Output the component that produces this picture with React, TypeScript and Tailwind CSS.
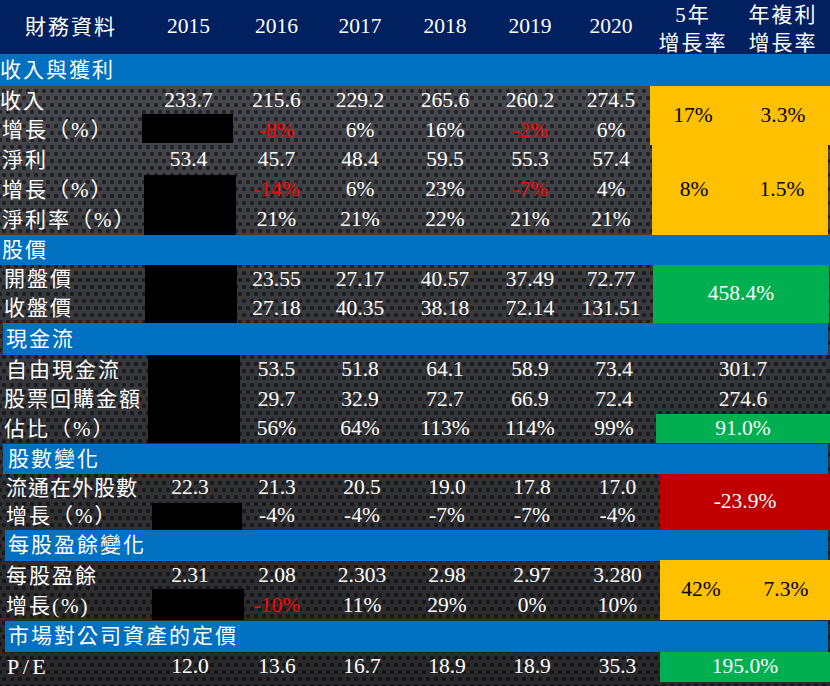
const FONT = "font-[family-name:Liberation_Serif,Noto_Sans_CJK_TC,serif]";

type Val = string | [string, "red"];

function Vals({ items }: { items: Val[] }) {
  return (
    <>
      {items.map((it, i) =>
        typeof it === "string" ? (
          <div key={i} className="flex items-center justify-center text-white">
            {it}
          </div>
        ) : (
          <div key={i} className="flex items-center justify-center text-[#ff0000]">
            {it[0]}
          </div>
        )
      )}
    </>
  );
}

function Label({ children, className = "" }: { children: React.ReactNode; className?: string }) {
  return (
    <div className={`flex items-center whitespace-nowrap text-[21px] text-white ${className}`}>
      {children}
    </div>
  );
}

function Bar({ title, className = "" }: { title: string; className?: string }) {
  return (
    <div
      className={`flex items-center whitespace-nowrap bg-[#0070c0] text-[21px] tracking-[2px] text-white ${className}`}
    >
      {title}
    </div>
  );
}

function Redact({ className = "" }: { className?: string }) {
  return <div className={`bg-black ${className}`} />;
}

function Split({ className, a, b }: { className: string; a: string; b: string }) {
  return (
    <div className={`grid items-center bg-[#ffc000] text-center text-black ${className}`}>
      <span>{a}</span>
      <span>{b}</span>
    </div>
  );
}

function Solid({ className, value }: { className: string; value: string }) {
  return <div className={`flex items-center justify-center text-white ${className}`}>{value}</div>;
}

export default function App() {
  return (
    <div
      className={`h-[686px] w-[830px] overflow-hidden ${FONT} text-[21.5px] leading-none [background-image:radial-gradient(circle,rgba(0,0,0,0.5)_1.9px,transparent_2.5px),radial-gradient(circle,rgba(0,0,0,0.5)_1.9px,transparent_2.5px),linear-gradient(to_bottom,#4e4f55,#3a3b3f_40%,#29292b)] [background-size:8px_14px,8px_14px,100%_100%] [background-position:0_0,4px_7px,0_0]`}
    >
      {/* 表頭 */}
      <div className="grid h-[54px] grid-cols-[142px_93px_83px_84px_86px_84px_78px_86px_94px] bg-[#002060] text-white">
        <div className="flex items-center justify-center text-[21px] tracking-[2px]">財務資料</div>
        {["2015", "2016", "2017", "2018", "2019", "2020"].map((y) => (
          <div key={y} className="flex items-center justify-center">
            {y}
          </div>
        ))}
        <div className="flex flex-col items-center justify-center gap-[7px] pt-[4px] text-[21px] tracking-[2px]">
          <span>5年</span>
          <span>增長率</span>
        </div>
        <div className="flex flex-col items-center justify-center gap-[7px] pt-[4px] text-[21px] tracking-[2px]">
          <span>年複利</span>
          <span>增長率</span>
        </div>
      </div>

      {/* 收入與獲利 */}
      <Bar title="收入與獲利" className="h-[32px]" />
      <div className="grid grid-cols-[142px_93px_83px_84px_86px_84px_78px_180px] grid-rows-[30px_29px_30px_30px_30px]">
        <Label className="tracking-[2px]">收入</Label>
        <Vals items={["233.7", "215.6", "229.2", "265.6", "260.2", "274.5"]} />
        <Split className="row-span-2 grid-cols-[86px_1fr]" a="17%" b="3.3%" />
        <Label className="pl-[2px] tracking-[2px]">增長（%）</Label>
        <Redact className="mb-[2px] mr-[2px] mt-[-2px]" />
        <Vals items={[["-8%", "red"], "6%", "16%", ["-2%", "red"], "6%"]} />
        <Label className="pl-[2px] tracking-[2px]">淨利</Label>
        <Vals items={["53.4", "45.7", "48.4", "59.5", "55.3", "57.4"]} />
        <Split className="row-span-3 ml-[2px] mr-[2px] grid-cols-[84px_1fr]" a="8%" b="1.5%" />
        <Label className="pl-[2px] tracking-[2px]">增長（%）</Label>
        <Redact className="row-span-2 ml-[2px] mr-[-1px]" />
        <Vals items={[["-14%", "red"], "6%", "23%", ["-7%", "red"], "4%"]} />
        <Label className="pl-[2px] tracking-[2px]">淨利率（%）</Label>
        <Vals items={["21%", "21%", "22%", "21%", "21%"]} />
      </div>

      {/* 股價 */}
      <Bar title="股價" className="h-[30px] pl-[2px]" />
      <div className="grid grid-cols-[142px_93px_83px_84px_86px_84px_78px_180px] grid-rows-[29px_29px]">
        <Label className="pl-[4px] tracking-[2px]">開盤價</Label>
        <Redact className="row-span-2 ml-[3px] mr-[-2px]" />
        <Vals items={["23.55", "27.17", "40.57", "37.49", "72.77"]} />
        <Solid className="row-span-2 ml-[3px] mr-[1px] bg-[#00b050]" value="458.4%" />
        <Label className="pl-[4px] tracking-[2px]">收盤價</Label>
        <Vals items={["27.18", "40.35", "38.18", "72.14", "131.51"]} />
      </div>

      {/* 現金流 */}
      <Bar title="現金流" className="ml-[3px] mr-[2px] h-[32px] pl-[3px]" />
      <div className="grid grid-cols-[142px_93px_83px_84px_86px_84px_84px_174px] grid-rows-[30px_29px_30px]">
        <Label className="pl-[6px] tracking-[2px]">自由現金流</Label>
        <Redact className="row-span-3 mb-[1px] ml-[6px] mr-[-5px]" />
        <Vals items={["53.5", "51.8", "64.1", "58.9", "73.4"]} />
        <Solid className="" value="301.7" />
        <Label className="pl-[4px] tracking-[2px]">股票回購金額</Label>
        <Vals items={["29.7", "32.9", "72.7", "66.9", "72.4"]} />
        <Solid className="" value="274.6" />
        <Label className="pl-[4px] tracking-[2px]">佔比（%）</Label>
        <Vals items={["56%", "64%", "113%", "114%", "99%"]} />
        <Solid className="mb-[1px] bg-[#00b050]" value="91.0%" />
      </div>

      {/* 股數變化 */}
      <Bar title="股數變化" className="ml-[3px] mr-[2px] h-[30px] pl-[5px]" />
      <div className="grid grid-cols-[145px_90px_84px_86px_84px_86px_85px_170px] grid-rows-[28px_28px]">
        <Label className="pl-[6px] tracking-[1px]">流通在外股數</Label>
        <Vals items={["22.3", "21.3", "20.5", "19.0", "17.8", "17.0"]} />
        <Solid className="row-span-2 bg-[#c00000]" value="-23.9%" />
        <Label className="pl-[6px] tracking-[2px]">增長（%）</Label>
        <Redact className="ml-[7px] mr-[-7px] mt-[1px]" />
        <Vals items={["-4%", "-4%", "-7%", "-7%", "-4%"]} />
      </div>

      {/* 每股盈餘變化 */}
      <Bar title="每股盈餘變化" className="ml-[5px] mr-[2px] h-[31px] pl-[3px]" />
      <div className="grid grid-cols-[145px_90px_84px_86px_84px_86px_85px_170px] grid-rows-[30px_30px]">
        <Label className="pl-[6px] tracking-[2px]">每股盈餘</Label>
        <Vals items={["2.31", "2.08", "2.303", "2.98", "2.97", "3.280"]} />
        <Split className="row-span-2 mb-[1px] mt-[-1px] grid-cols-[82px_1fr]" a="42%" b="7.3%" />
        <Label className="pl-[6px] tracking-[2px]">增長(%)</Label>
        <Redact className="mb-[1px] ml-[7px] mr-[-9px] mt-[-2px]" />
        <Vals items={[["-10%", "red"], "11%", "29%", "0%", "10%"]} />
      </div>

      {/* 市場對公司資產的定價 */}
      <Bar title="市場對公司資產的定價" className="ml-[5px] mr-[2px] h-[31px] pl-[3px] tracking-[2.6px]" />
      <div className="grid grid-cols-[145px_90px_84px_86px_84px_86px_85px_170px] grid-rows-[30px]">
        <Label className="pl-[7px]">
          <span className="text-[22px] tracking-[3.5px]">P/E</span>
        </Label>
        <Vals items={["12.0", "13.6", "16.7", "18.9", "18.9", "35.3"]} />
        <Solid className="bg-[#00b050]" value="195.0%" />
      </div>
    </div>
  );
}
